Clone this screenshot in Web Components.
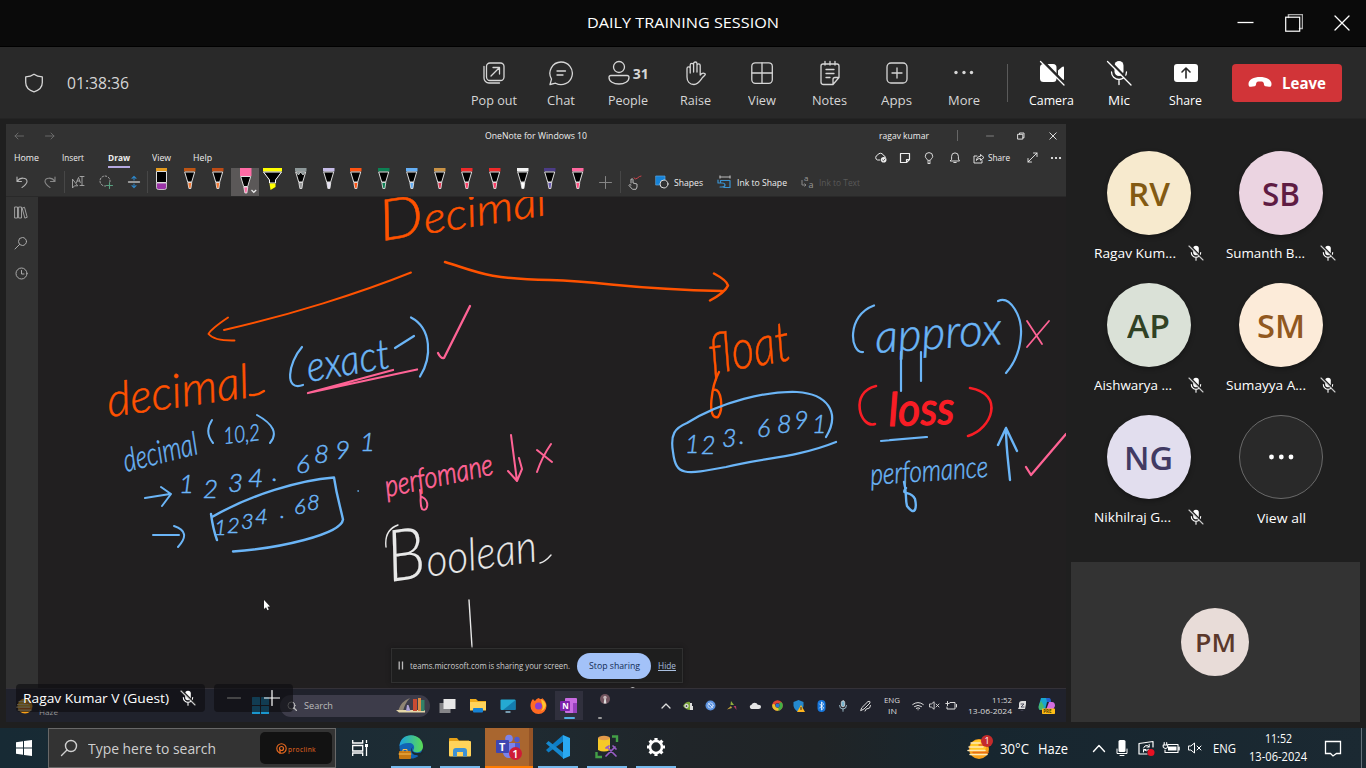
<!DOCTYPE html>
<html lang="en">
<head>
<meta charset="utf-8">
<title>DAILY TRAINING SESSION</title>
<style>
html,body{margin:0;height:100%;background:#1f1f1f;overflow:hidden}
body{font-family:"Open Sans","Noto Sans",sans-serif;color:#fff}
</style>
</head>
<body>
<meeting-app></meeting-app>
<script>
const svg = (w,h,vb,body) => `<svg width="${w}" height="${h}" viewBox="${vb}" fill="none" stroke="currentColor" stroke-width="1.3" stroke-linecap="round" stroke-linejoin="round">${body}</svg>`;
const F = 'stroke="none" fill=';
const ICONS = {
  shield: svg(20,20,'0 0 20 20','<path d="M10 1.2c2.3 1.7 4.8 2.500 8.300 2.700V9.500c0 4.600-3.400 7.800-8.300 9.300C5.100 17.300 1.700 14.100 1.700 9.500V3.900C5.200 3.700 7.700 2.900 10 1.200z"/>'),
  popout: svg(26,26,'0 0 26 26','<rect x="5.500" y="3" width="17.500" height="17.500" rx="3.500"/><path d="M3 6.500v11.500a5 5 0 0 0 5 5h10.500M10 16l8-8M12 7.500h6.500V14"/>'),
  chat: svg(26,26,'0 0 26 26','<path d="M13 2a11.300 11.300 0 1 1-5.400 21.200L2 24.500l1.500-5.400A11.300 11.300 0 0 1 13 2zM9 11h8.500M9 15h6"/>'),
  people: svg(22,26,'0 0 22 26','<circle cx="11" cy="7" r="5.500"/><path d="M3 15.500h16c1.200 0 2 .8 2 2 0 4-4.500 6.500-10 6.500S1 21.500 1 17.500c0-1.200.8-2 2-2z"/>'),
  hand: svg(26,26,'0 0 26 26','<path d="M5 17V8.500a1.600 1.600 0 0 1 3.200 0V13 5a1.700 1.700 0 0 1 3.400 0v7V3.700a1.700 1.700 0 0 1 3.400 0V12 5.500a1.600 1.600 0 0 1 3.200 0V15c1.200-1.500 3-2.500 4.800-1.300.6.4.3 1-.2 1.500l-2 2C18.500 20 16.500 24.500 12 24.500 7.500 24.500 5 21.500 5 17z"/>'),
  view: svg(26,26,'0 0 26 26','<rect x="2.800" y="2.800" width="20.500" height="20.500" rx="3.500"/><path d="M13 3v20M3 13h20"/>'),
  notes: svg(26,26,'0 0 26 26','<path d="M6 4h14a2 2 0 0 1 2 2v11.500L16 24.500H6.500A2.500 2.500 0 0 1 4 22V6a2 2 0 0 1 2-2zM8 1.500V5M13 1.500V5M18 1.500V5M9 9.500h8M9 13.500h8M9 17.500h4M16 24v-4.500a2 2 0 0 1 2-2h4"/>'),
  apps: svg(26,26,'0 0 26 26','<rect x="3" y="3" width="20" height="20" rx="4"/><path d="M13 8v10M8 13h10"/>'),
  more: svg(26,26,'0 0 26 26',`<g ${F}"currentColor"><circle cx="5" cy="12.500" r="1.700"/><circle cx="13" cy="12.500" r="1.700"/><circle cx="20.500" cy="12.500" r="1.700"/></g>`),
  camera: svg(26,26,'0 0 26 26',`<g ${F}"#fff"><rect x="1" y="4" width="16.500" height="18" rx="3.500"/><path d="M19 10.500 23 7q2-1.300 2 .8v11q0 2-2 .6l-4-3.200z"/></g><path d="M2.500 0 26 24" stroke="#292929" stroke-width="3"/><path d="M1.500 1.500 25 25" stroke="#fff"/>`),
  mic: svg(26,26,'0 0 26 26',`<rect ${F}"#fff" x="8.500" y="1" width="9" height="15" rx="4.500"/><path d="M5.500 12a7.500 7.500 0 0 0 15 0M13 19.500v5" stroke="#fff"/><path d="M2.500 0 26 24" stroke="#292929" stroke-width="2.500"/><path d="M1.500 1.500 25 25" stroke="#fff"/>`),
  share: svg(26,26,'0 0 26 26',`<rect ${F}"#fff" x="1" y="4" width="24" height="18" rx="3"/><path d="M13 18V8.500M9 12l4-4 4 4" stroke="#292929" stroke-width="1.600"/>`),
  phone: svg(24,14,'0 0 24 14',`<path ${F}"#fff" d="M12 1C18 1 23.500 3.500 23.500 8c0 2.500-1 3-2.500 2.800l-3.500-.6c-1.300-.3-1.500-1.300-1.700-3-.1-1.300-1.700-1.700-3.800-1.700s-3.700.4-3.800 1.700c-.2 1.700-.4 2.700-1.700 3L3 10.800C1.500 11 .5 10.500.5 8 .5 3.500 6 1 12 1z"/>`),
  wmin: svg(17,18,'0 0 17 18','<path d="M.5 8.500h16" stroke-linecap="butt"/>'),
  wmax: svg(18,18,'0 0 18 18','<path d="M3.500 3.500v-3h14v14h-3" stroke="#aaa" stroke-width="1.500" stroke-linejoin="miter"/><rect x=".7" y="3.200" width="14" height="14" stroke-width="1.200" stroke-linejoin="miter"/>'),
  wclose: svg(16,16,'0 0 16 16','<path d="m1 1 14 14M15 1 1 15"/>'),
  micoff: svg(16,16,'0 0 16 16',`<rect ${F}"#fff" x="5.200" y=".8" width="5.600" height="9.500" rx="2.800"/><path d="M3.300 7.500a4.700 4.700 0 0 0 9.400 0M8 12.300v3" stroke-width="1.100"/><path d="M1.800.3 16 14.500" stroke="#222" stroke-width="1.600"/><path d="m1 1 14 14" stroke-width="1.100" stroke="#ccc"/>`),
  dots: svg(28,8,'0 0 28 8',`<g ${F}"#fff"><circle cx="4.500" cy="4" r="2.400"/><circle cx="14.300" cy="4" r="2.400"/><circle cx="24" cy="4" r="2.400"/></g>`),
  back: svg(10,8,'0 0 10 8','<path d="M9.500 4H1M4 1 1 4l3 3" stroke="#6e6e6e" stroke-width=".9"/>'),
  fwd: svg(10,8,'0 0 10 8','<path d="M.5 4H9M6 1l3 3-3 3" stroke="#6e6e6e" stroke-width=".9"/>'),
  smin: svg(8,8,'0 0 8 8','<path d="M.5 4h7" stroke="#888" stroke-width=".9"/>'),
  smax: svg(8,8,'0 0 8 8','<rect x="1" y="2.300" width="4.800" height="4.800" stroke-width=".9"/><path d="M2.500 2V1H7v4.800H6" stroke-width=".9"/>'),
  sclose: svg(8,8,'0 0 8 8','<path d="m.8.8 6.400 6.400M7.200.8.8 7.200" stroke-width=".9"/>'),
  cloud: svg(13,11,'0 0 13 11','<path d="M6 8H3.500a2.500 2.500 0 0 1 0-4.800 3.200 3.200 0 0 1 6 .3q1.700.2 1.900 1.800" stroke-width="1"/><circle cx="9.700" cy="7.800" r="2.800" fill="#eee" stroke="none"/><path d="m8.500 8 .9.800L11 7" stroke="#333" stroke-width=".8"/>'),
  sticky: svg(12,12,'0 0 12 12','<path d="M1.500 1.500h9v6l-3 3h-6zM10.500 7.500h-3v3" stroke-width="1.200"/>'),
  bulb: svg(10,12,'0 0 10 12','<path d="M3.500 8C3 6.500 1.300 6 1.300 4.300a3.700 3.700 0 0 1 7.400 0C8.700 6 7 6.500 6.500 8zM3.500 10h3M4 11.500h2" stroke-width=".9"/>'),
  bell: svg(12,12,'0 0 12 12','<path d="M1.500 9h9L9.400 7V4.300a3.400 3.400 0 0 0-6.800 0V7zM4.800 10.500h2.400" stroke-width=".9"/>'),
  sshare: svg(12,12,'0 0 12 12','<path d="M4 4H1v7h8V8.500M3.500 8q.5-3.700 4-3.700V2.500L11 5.500 7.500 8.300V6.500q-2.500-.2-4 1.500z" stroke-width=".9"/>'),
  expand: svg(11,11,'0 0 11 11','<path d="m1 10 9-9M6.500 1H10v3.500M1 6.500V10h3.500" stroke-width=".9"/>'),
  sdots: svg(12,4,'0 0 12 4',`<g ${F}"#fff"><circle cx="2" cy="2" r="1.100"/><circle cx="6" cy="2" r="1.100"/><circle cx="10" cy="2" r="1.100"/></g>`),
  undo: svg(14,14,'0 0 14 14','<path d="M2 2v4.500h4.500M2.200 6.300C5 2 12 2.200 12 6.500c0 2.500-3 4.500-5 6" stroke="#b4b4b4" stroke-width="1.100"/>'),
  redo: svg(14,14,'0 0 14 14','<path d="M12 2v4.500H7.500M11.800 6.300C9 2 2 2.200 2 6.500c0 2.500 3 4.500 5 6" stroke="#888" stroke-width="1.100"/>'),
  select: svg(14,14,'0 0 14 14','<path d="M1.500 4.500v8.500l2-2.200h2.800zM9 1.500h4M11 1.500v9M9 10.500h4M5.500 7.500 7.500 2.500 9.300 7.500M6 6h2.700" stroke-width=".9" stroke="#aaa"/>'),
  lasso: svg(14,14,'0 0 14 14','<circle cx="6" cy="6" r="5" stroke-dasharray="1.500 1.800" stroke="#aaa" stroke-width="1"/><rect x="7" y="7" width="7" height="7" fill="#323232" stroke="none"/><path d="M10.500 7.500v6M7.500 10.500h6" stroke="#58a080" stroke-width="1.100"/>'),
  space: svg(14,14,'0 0 14 14','<path d="M1.500 7h11" stroke="#bbb"/><path d="M7 5V1.500M5 3.300l2-2 2 2M7 9v3.500M5 10.700l2 2 2-2" stroke="#2d86c8" stroke-width="1.100"/>'),
  plus: svg(13,13,'0 0 13 13','<path d="M6.500.5v12M.5 6.500h12" stroke="#858585" stroke-width="1"/>'),
  touch: svg(15,15,'0 0 15 15','<path d="M4 8V5M4 4.700a1 1 0 0 1 2 0V8l4 1v3l-1 2.300H5.500L2 10.500q0-1.600 2-.5" stroke="#bbb" stroke-width="1"/><path d="M7 3q1.500 2 3.500 0T14 1" stroke="#ce414a" stroke-width="1"/>'),
  shapes: svg(14,14,'0 0 14 14','<rect x="1" y="1" width="9" height="9" fill="#1683d8" stroke="#53a6e8" stroke-width=".7"/><circle cx="9" cy="9" r="4" fill="#323232" stroke="#ddd" stroke-width="1"/>'),
  inkshape: svg(15,14,'0 0 15 14','<path d="M3 2h10M3 .8v2.400M13 .8v2.400" stroke="#ccc" stroke-width=".9"/><path d="M7 12.500h6V5.500H3.500V8M1 5v3h4q3 0 3 2t-3 2H3" stroke="#3a92cf" stroke-width="1.200"/>'),
  inktext: `<svg width="15" height="16" viewBox="0 0 15 16" fill="none"><text x="4" y="7" font-size="8" fill="#999">a</text><text x="8.500" y="14" font-size="9" fill="#999">a</text><path d="M2 6v5h4M4.500 9.500 6 11l-1.500 1.500" stroke="#888"/></svg>`,
  books: svg(14,13,'0 0 14 13','<path d="M1 1h2.500v11H1zM5 1h2.500v11H5zM8.500 2l2-.7 2.700 10-2 .7z" stroke="#aaa" stroke-width=".9"/>'),
  find: svg(14,14,'0 0 14 14','<circle cx="8.500" cy="5.500" r="4" stroke="#aaa" stroke-width="1"/><path d="M5.500 8.500 1 13" stroke="#aaa" stroke-width="1"/>'),
  clock: svg(13,13,'0 0 13 13','<circle cx="6.500" cy="6.500" r="5.500" stroke="#aaa" stroke-width="1"/><path d="M6.500 3.500V7H9" stroke="#aaa" stroke-width="1"/>'),
  win11: svg(17,17,'0 0 17 17',`<g ${F}"#1a97cf"><rect width="8" height="8" rx=".5"/><rect x="9" width="8" height="8" rx=".5"/><rect y="9" width="8" height="8" rx=".5"/><rect x="9" y="9" width="8" height="8" rx=".5"/></g>`),
  win10: svg(16,16,'0 0 16 16',`<path ${F}"#fff" d="M0 2.200 7 1.200V7.500H0zM8 1.100 16 0V7.500H8zM0 8.500H7V14.800L0 13.800zM8 8.500h8V16L8 14.900z"/>`),
  sun: svg(24,22,'0 0 24 22',`<circle ${F}"#f9a119" cx="12" cy="11" r="10"/><path ${F}"#ffc928" d="M4 6A10 10 0 0 1 20 6l-2 7H3z"/><path d="M4 5h9M2 9h14M1 12.500h17M3 16.500h17" stroke="#ffe9b5" stroke-width="1.500"/><path d="M12 7h8M6 14.500h15" stroke="#e86c18" stroke-width="1.300"/>`),
  sgrey: svg(10,10,'0 0 10 10','<circle cx="4.500" cy="4.500" r="3.500" stroke="#bbb" stroke-width="1"/><path d="m7 7 2.500 2.500" stroke="#bbb"/>'),
  museum: svg(32,17,'0 0 32 17',`<g ${F}"#b58c5b"><path d="M3 14Q6 4 15 1q-5 5-7 13z" fill="#8f8574"/><path d="M1 13h29v2.500H4z" fill="#e4d6a8"/><path d="m11 14 1-6h1.500l2 6z" fill="#afa4d7"/><rect x="18" y="2" width="4" height="12" fill="#c84b33"/><rect x="23" y="1" width="3" height="13" fill="#d98c45"/><rect x="26" y="3" width="3.500" height="11" fill="#338067"/></g>`),
  tv11: svg(17,16,'0 0 17 16',`<rect ${F}"#858588" x=".5" y="5" width="11" height="10"/><rect ${F}"#e7e7e7" x="4.500" y="1" width="12" height="10"/>`),
  folder: svg(26,22,'0 0 26 22',`<path ${F}"#e6a117" d="M2 3q0-1 1-1h7l2 2.500h10V9H2z"/><rect ${F}"#ffd35a" x="2" y="5" width="22" height="15.500" rx="1"/><path ${F}"#3c91d4" d="M6 20.500V15q0-3 3-3h8q3 0 3 3v5.500h-4V16h-6v4.500z"/>`),
  folder11: svg(18,15,'0 0 18 15',`<path ${F}"#f0ae1d" d="M1 1h6l2 2h8v5H1z"/><rect ${F}"#ffd45a" x="1" y="4" width="16" height="8.500"/><rect ${F}"#1682d4" x="4" y="10" width="10" height="4.500" rx="1"/>`),
  monitor: svg(16,14,'0 0 16 14',`<rect ${F}"#25a9d2" x=".5" y=".5" width="15" height="10.500" rx="1"/><path ${F}"#147cae" d="M15.500 1v10H3z"/><path d="M6 13h4" stroke="#93c4da"/>`),
  firefox: svg(17,17,'0 0 17 17',`<path ${F}"#ff6b22" d="M8.500 1C10 2 12 3 12 1c3 2 4.500 5 4.500 8A8 8 0 0 1 .5 9C.5 6 1.500 3.500 3 2q1 1.500 2 2 1-2 3.500-3z"/><circle ${F}"#8b3fd1" cx="8.500" cy="9" r="3.500"/><path ${F}"#ffc62d" d="M11 2q4 2 5 6-1 5-5 6 3-3 1-7z"/>`),
  onenote: svg(18,18,'0 0 18 18',`<rect ${F}"#c96be2" x="5" y="1" width="12" height="15" rx="1"/><path ${F}"#9740bd" d="M13 6h4v10h-4z"/><rect ${F}"#7d22ab" x="0" y="4" width="10" height="10" rx="1"/><text x="2.300" y="12" font-size="8" font-weight="700" fill="#fff" stroke="none">N</text>`),
  person: svg(12,30,'0 0 12 30',`<circle ${F}"#71545e" cx="7" cy="8" r="5"/><circle ${F}"#c8b8bb" cx="7" cy="6.500" r="1.700"/><path ${F}"#ddd" d="M6.300 8h1.500l.6 4.500H5.700z"/><rect ${F}"#999" x="0" y="26" width="4" height="2" rx="1"/>`),
  up: svg(10,8,'0 0 10 8','<path d="m1 6 4-4 4 4"/>'),
  up10: svg(14,9,'0 0 14 9','<path d="m1.500 7.500 5.500-6 5.500 6" stroke-width="1.400"/>'),
  nvidia: svg(11,10,'0 0 11 10',`<path ${F}"#7ca63a" d="M0 5q3-5 7-4v8Q3 9 0 5z"/><circle cx="3.500" cy="5" r="1.500" fill="#222"/><path ${F}"#ddd" d="M7 2h2v3h1v4H7z"/>`),
  blue: svg(11,11,'0 0 11 11',`<circle ${F}"#5b92e0" cx="5.500" cy="5.500" r="5"/><circle cx="5.500" cy="5.500" r="2.600" stroke="#d3e3fb" stroke-width=".8"/><path d="M3.500 3.500l4 4" stroke="#d3e3fb" stroke-width="1"/>`),
  tri: svg(10,10,'0 0 10 10',`<path ${F}"#8fae3c" d="m4 0 3 4H3.500z"/><path ${F}"#c8a53b" d="m0 8.500 4-3.500 1 2z"/><path ${F}"#b03a64" d="M6.500 5H9l.5 4z"/>`),
  wcloud: svg(12,9,'0 0 12 9',`<path ${F}"#e5e5e5" d="M2.500 8a2.200 2.200 0 0 1 0-4.300 3.500 3.500 0 0 1 6.300 0Q12 3.600 12 6 12 8 9.500 8z"/>`),
  color: svg(11,11,'0 0 11 11',`<circle cx="5.500" cy="5.500" r="3.800" stroke="#e44332" stroke-width="3"/><path d="M5.500 9.300a3.800 3.800 0 0 0 3.300-5.600" stroke="#41b145" stroke-width="3"/><path d="M1.700 5.500a3.800 3.800 0 0 0 3.500 3.800" stroke="#e8c22c" stroke-width="3"/><circle ${F}"#2476cf" cx="5.500" cy="5.500" r="2"/>`),
  defend: svg(12,12,'0 0 12 12',`<path ${F}"#2489ce" d="M5.500 0 10.500 2v4q-1 4-5 6-4-2-5-6V2z"/><path ${F}"#ffb51e" d="m8 5 4 7H4z"/><path d="M8 7.500v2" stroke="#222" stroke-width="1"/>`),
  bt: svg(9,12,'0 0 9 12',`<rect ${F}"#1676dc" x=".5" width="8" height="12" rx="4"/><path d="m2.700 4 4 4L4.500 10V2l2.200 2-4 4" stroke="#fff" stroke-width=".8"/>`),
  smic: svg(10,12,'0 0 10 12','<rect x="3.300" y=".8" width="3.400" height="6" rx="1.700" fill="#77b3cd" stroke-width=".8"/><path d="M1.500 5.500a3.500 3.500 0 0 0 7 0M5 9v2.300" stroke="#a5c5d2" stroke-width=".9"/>'),
  pen: svg(12,12,'0 0 12 12','<path d="m2 7.500 6-6q2.500-1 2 1.500l-6 6-3 1.500zM5 11q1-3 3-2.500t2.500-3" stroke-width="1"/>'),
  wifi: svg(12,10,'0 0 12 10','<path d="M.7 3.500q5.300-4 10.600 0M2.500 5.500q3.500-2.500 7 0M4.300 7.300q1.700-1.100 3.400 0M6 8.800h.1" stroke-width="1"/>'),
  mute: svg(14,12,'0 0 14 12','<path d="M.8 4h2L6.500 1v10L2.800 8h-2zM9 4l4 4M13 4 9 8" stroke-width="1"/>'),
  mute11: svg(11,9,'0 0 14 12','<path d="M.8 4h2L6.500 1v10L2.800 8h-2zM9 4l4 4M13 4 9 8" stroke-width="1.200"/>'),
  batt: svg(12,9,'0 0 12 9','<path d="M5 1.500h5v6.500H2V6M11.500 3.500V6M2.500.5v4M.8 2.500h3.400" stroke-width="1"/>'),
  dnd: svg(10,12,'0 0 10 12',`<path ${F}"#ddd" d="m1 9 1-2V4q0-3 3-3h4v3L8 9z"/><path d="M4 10.500h2M4 4h3L4 7h3" stroke="#445" stroke-width=".9"/>`),
  copilot: svg(18,18,'0 0 18 18',`<path ${F}"#18a6cf" d="M3 1h7L7 13H2Q0 12 1 8z"/><path ${F}"#47b76c" d="m1 8 2-4 3 5-1 4H2Q0 12 1 8z"/><path ${F}"#2562d0" d="M8 1h3q2 0 2 4H9z"/><path ${F}"#d46de0" d="M11 5h3q3 0 3 4l-2 4H8z"/><rect ${F}"#ffbd16" x="4" y="11.500" width="13" height="5.500" rx=".7"/><text x="5.200" y="16" font-size="4.500" font-weight="700" fill="#553b00" stroke="none">PRE</text>`),
  search: svg(18,18,'0 0 18 18','<circle cx="11" cy="7" r="5.500" stroke-width="1.400"/><path d="M7 11 1.500 16.500" stroke-width="1.400"/>'),
  taskview: svg(18,18,'0 0 18 18','<path d="M1.700 1v3h10V1M1.700 17v-3h10v3M1.700 6.500h10v5.500h-10zM15.500 1v3M15.500 8v9" stroke-linecap="butt" stroke-linejoin="miter"/><rect x="14" y="5" width="3" height="3" fill="#fff" stroke="none"/>'),
  edge: svg(26,26,'0 0 26 26',`<defs><linearGradient id="eg"><stop stop-color="#1ba0e2"/><stop offset="1" stop-color="#5adb52"/></linearGradient></defs><circle ${F}"#1263b4" cx="13" cy="13" r="11.500"/><path ${F}"url(#eg)" d="M1.500 12C2 5 7 1.200 13 1.200c7 0 12 5 12 11 0 4-3 6-6.500 6-2.500 0-4-1.300-3-2.700 1.500-2 .5-6-3.500-6.500C7 8.500 3 10 1.500 12z"/><path ${F}"#1b2830" d="M14.500 12.500q-2.500 6 4.500 6.500 3 .3 5.500-1.500l1 1-4 4-3-1.500q-2 .5-4-1.500-2.500-3 0-7z"/><rect ${F}"#c57812" x="1" y="17" width="12" height="8" rx="1"/><path d="M5 17v-1.500h4V17M1 20h12" stroke="#f5bd57" stroke-width="1"/>`),
  teams: svg(26,26,'0 0 26 26',`<circle ${F}"#7b83eb" cx="13" cy="4.500" r="3.800"/><circle ${F}"#5059c9" cx="21" cy="5.500" r="2.700"/><path ${F}"#5059c9" d="M17 9h7v8q-1 4-7 3z"/><path ${F}"#7b83eb" d="M8 9h11v9q-1 6-6 6t-6-5z"/><rect ${F}"#3e46b2" y="6" width="13" height="13" rx="1"/><text x="3" y="16.500" font-size="11" font-weight="700" fill="#fff" stroke="none">T</text><circle ${F}"#cf1b36" cx="19.500" cy="19.500" r="6.500"/><text x="16.300" y="23.500" font-size="11" font-weight="600" fill="#fff" stroke="none">1</text>`),
  vscode: svg(26,26,'0 0 26 26',`<path ${F}"#0d7dc5" d="M18 1 1 16l2.500 2.500L19 7z"/><path ${F}"#1688ce" d="M1 9.500 3.500 7 19 19v6z"/><path ${F}"#2aa9f1" d="m18 1 7 3v18l-7 3z"/>`),
  sql: svg(24,24,'0 0 24 24',`<path ${F}"#f6c928" d="M3 3h12v12q-6 3-12 0z"/><ellipse ${F}"#e39b4b" cx="9" cy="3" rx="6" ry="2.200"/><path d="M17 1.500h5V7M1.500 17v5H7" stroke="#43a047" stroke-width="2.400" stroke-linecap="butt" stroke-linejoin="miter"/><path d="m12 12 9 9M20 12l-9 9M11 13l3-2M18 11l3 3" stroke="#985dc5" stroke-width="1.700"/>`),
  gear: svg(20,20,'0 0 20 20','<circle cx="10" cy="10" r="6" stroke-width="2.600"/><path d="M10 1v3M10 16v3M1 10h3M16 10h3M3.600 3.600l2.100 2.100M14.300 14.300l2.100 2.100M16.400 3.600l-2.100 2.100M5.700 14.300l-2.100 2.100" stroke-width="3.200" stroke-linecap="butt"/>'),
  fmic: svg(12,16,'0 0 12 16',`<rect ${F}"#fff" x="2.500" width="7" height="12" rx="1.500"/><path d="M1 9v4.500h10V9M4 15.500h4" stroke-width="1"/>`),
  sync: svg(18,17,'0 0 18 17','<path d="m1 3.500 14-2v4M1 3.500V14h8M15 7V2" stroke-width="1.200"/><path d="M5.500 8q1-3 4-2.500L11 7M11.200 4.500V7H9M10.500 9.500q-2 2.500-4.500.5M5.500 12V9.500H8" stroke-width="1"/><circle cx="13" cy="12.500" r="3.500" fill="#e81123" stroke="none"/>'),
  plug: svg(18,14,'0 0 18 14',`<path d="M6 3.500h10v8H3V9M17.200 6v3M1.200 4h4.500v2q-2 3-4.500 0zM2.200 4V1.500M4.700 4V1.500" stroke-width="1.100"/><rect ${F}"#fff" x="6" y="5.500" width="8.500" height="4"/>`),
  note: svg(18,17,'0 0 18 17','<path d="M1.500 1.500h15v12h-4L9 16l-2.500-2.500h-5z" stroke-linejoin="miter"/>'),
  minus: svg(14,14,'0 0 14 14','<path d="M.5 7h13" stroke="#555"/>'),
  bigplus: svg(16,16,'0 0 16 16','<path d="M8 .5v15M.5 8h15" stroke-width="1.200"/>'),
  target: svg(11,11,'0 0 11 11','<circle cx="5.500" cy="5.500" r="4.700" stroke="#ec6b20" stroke-width="1.100"/><circle cx="5.500" cy="5.500" r="2" stroke="#ec6b20" stroke-width="1.200"/><path d="M4 7v3" stroke="#ec6b20"/>'),
  pause: svg(6,9,'0 0 6 9','<path d="M1.200.5v8M4.500.5v8" stroke="#bbb" stroke-linecap="butt"/>')
};

const el = (tag, render, after) => customElements.define(tag, class extends HTMLElement {
  connectedCallback(){
    if(this.shadowRoot) return;
    this.attachShadow({mode:'open'}).innerHTML = render(this);
    if(after) after(this);
  }
});
const BASE = `*{box-sizing:border-box}ui-icon{flex:none}.c{display:flex;align-items:center;justify-content:center;flex:none}.g{flex:1}`;
const t = (s,w,size,extra='') => `<fit-text w="${w}" style="font-size:${size}px;${extra}">${s}</fit-text>`;
const cell = (w,inner,extra='') => `<div class="c" style="width:${w}px;${extra}">${inner}</div>`;
const ic = n => `<ui-icon name="${n}"></ui-icon>`;
/* Places fixed-size cells around their centres in one row: [centre, markup, width] */
const row = (start, items) => { let x=start; return items.map(([cx,m,w=14]) => { const gap=cx-w/2-x; x=cx+w/2; return cell(w,m,`margin-left:${gap}px`); }).join(''); };

el('ui-icon', e => `<style>:host{display:inline-flex}svg{display:block}text{font-family:"Open Sans",sans-serif}</style>${ICONS[e.getAttribute('name')]||''}`);

el('title-bar', () => `<style>${BASE}:host{display:grid;grid-template-columns:1fr auto 1fr;height:47px;background:#0a0a0a;border-bottom:1px solid #000;align-items:center}
nav{display:flex;justify-content:flex-end;gap:31px;padding-right:16px;align-items:center;height:46px}</style><span></span>${t('DAILY TRAINING SESSION',192,14.5,'margin-top:-1px')}<nav>${ic('wmin')}${ic('wmax')}${ic('wclose')}</nav>`);

el('call-button', e => `<style>${BASE}:host{display:flex;flex-direction:column;align-items:center;width:67.100px;color:#d6d6d6;flex:none;padding-top:13px}
:host([on]){color:#fff}.i{display:flex;height:26px;align-items:center;gap:3px;margin-bottom:5px}b{font-size:14px}</style><div class="i">${ic(e.getAttribute('icon'))}${e.hasAttribute('count')?`<b>${e.getAttribute('count')}</b>`:''}</div>${t(e.getAttribute('label'),e.getAttribute('w'),13)}`);

el('call-toolbar', () => `<style>${BASE}:host{display:flex;height:72px;background:#292929;border-bottom:1px solid #242424;padding-left:24px}
.clock{display:flex;align-items:center;gap:23px;width:436.500px;color:#d6d6d6}.sep{width:1px;height:38px;background:#5a5a5a;margin:17px 10px 0}
.leave{width:110px;height:38px;margin:17px 0 0 12px;border-radius:4px;background:#d13438;display:flex;align-items:center;justify-content:center;gap:10px;font-weight:700}</style>
<div class="clock">${ic('shield')}${t('01:38:36',62,16.500)}</div>
${[['popout','Pop out',46],['chat','Chat',28],['people','People',40,31],['hand','Raise',31],['view','View',28],['notes','Notes',35],['apps','Apps',31],['more','More',32]].map(([i,l,w,c])=>`<call-button icon="${i}" label="${l}" w="${w}" ${c?`count="${c}"`:''}></call-button>`).join('')}
<div class="sep"></div>${[['camera','Camera',45],['mic','Mic',22],['share','Share',33]].map(([i,l,w])=>`<call-button on icon="${i}" label="${l}" w="${w}"></call-button>`).join('')}
<div class="leave">${ic('phone')}${t('Leave',44,15.500)}</div>`);

el('ink-pen', e => { const c=e.getAttribute('color'), n=e.getAttribute('tip')||c, k=e.getAttribute('kind');
  const body = k==='eraser' ? `<path d="M2 0h11v3H2z" fill="#e39a1e"/><path d="M2.500 3.500h10v11h-10z" fill="#000" stroke="#ddd"/><path d="M2.500 15h10v4.500q0 2-2 2h-6q-2 0-2-2z" fill="#9b35a8" stroke="#ddd" stroke-width=".8"/>`
   : k==='marker' ? `<path d="M-2 0h19v3.500h-19z" fill="${c}"/><path d="M-1.500 4h18l-6 8v3h-6v-3z" fill="#000" stroke="#fff"/><path d="M4.500 15.500h6V19l-5 3z" fill="${c}"/>`
   : `<path d="M2 0h11.500v${k==='on'?8:3.500}H2z" fill="${c}"/><g transform="translate(0 ${k==='on'?4.500:0})"><path d="M2.700 4h10l-3 10h-4z" fill="#000" stroke="#ddd"/><path d="M5.800 14.500h4l-.9 6h-2z" fill="${n}" stroke="#eee" stroke-width=".8"/></g>${k==='pencil'?'<path d="m3 4 2.500 3 2-3 2.500 3L12.500 4" fill="#8d9899" stroke="#ddd" stroke-width=".7"/>':''}`;
  return `<style>:host{display:flex;width:27.720px;height:28px;justify-content:center;flex:none}:host([kind=on]){background:#5b5858}svg{overflow:visible}</style><svg width="15" height="27" viewBox="0 0 15 27">${body}${k==='on'?'<path d="m13.500 22 2.300 2.300L18.200 22" fill="none" stroke="#eee" stroke-width="1.200"/>':''}</svg>`; });

el('onenote-ribbon', () => `<style>${BASE}:host{display:block;height:73px;background:#323232;border-bottom:1px solid #292929;color:#eee}
.r{display:flex;align-items:center}.a{height:23px}.b{height:21px}.d{height:28px}.v{width:1px;height:22px;background:#474747}
.tab{height:21px;border-bottom:2px solid transparent;padding-top:2px}.on{border-color:#b5a8e0;font-weight:700}</style>
<div class="r a">${row(6,[[19,ic('back')],[50,ic('fwd')],[536,t('OneNote for Windows 10',102,9),102],[903.500,t('ragav kumar',50,8.500),50],[957.500,'<i class="v" style="height:11px;background:#666"></i>',2],[990,ic('smin')],[1021,ic('smax')],[1052.500,ic('sclose')]])}</div>
<div class="r b">${[[26.500,'Home',25],[73,'Insert',22],[118.500,'Draw',22,1],[161.500,'View',19],[202.500,'Help',19]].reduce((o,[cx,s,w,on])=>{o.h+=`<div class="c tab ${on?'on':''}" style="width:${w}px;margin-left:${cx-w/2-o.x}px">${t(s,w,9)}</div>`;o.x=cx+w/2;return o},{h:'',x:6}).h}
${row(212,[[880,ic('cloud')],[904.500,ic('sticky')],[929,ic('bulb')],[955,ic('bell')],[978.500,ic('sshare')],[998.500,t('Share',22,9),23],[1032,ic('expand')],[1056,ic('sdots')]])}</div>
<div class="r d">${row(6,[[22,ic('undo')],[50,ic('redo')],[64.500,'<i class="v"></i>',1],[78,ic('select')],[106,ic('lasso')],[133.500,ic('space')],[147.500,'<i class="v"></i>',1]])}
${[['#e39a1e','','eraser'],['#bd5413','#f37a35'],['#bd4b15','#f37a35'],['#ff6ba5','','on'],['#ffff00','','marker'],['#8d9899','#999','pencil'],['#c6bce8','#e4e0f3'],['#ff5211'],['#0c8053'],['#65aff5'],['#c99245','#e33c58'],['#ef2929','#ff3e67'],['#ef2929','#ff3e67'],['#f3f3f3','#fff'],['#4b3b86','#6a5bb0'],['#ff689f','#ff4d80']].map(([c,n,k])=>`<ink-pen color="${c}" tip="${n||''}" kind="${k||''}"></ink-pen>`).join('')}
${row(591.500,[[605,ic('plus')],[620,'<i class="v"></i>',1],[634,ic('touch')],[661.500,ic('shapes')],[688.500,t('Shapes',29,9),29],[724,ic('inkshape')],[761.500,t('Ink to Shape',50,9),50],[807,ic('inktext')],[839.500,t('Ink to Text',41,9,'color:#595959'),41]])}</div>`);

const num = (s, size, pts) => `<text font-size="${size}">${pts.map(([x,y],i)=>`<tspan x="${x}" y="${y}">${s[i]}</tspan>`).join('')}</text>`;
el('ink-canvas', () => `<style>:host{display:block;flex:1;background:#211f20;position:relative;overflow:hidden}
svg{display:block}text{font-family:Lato,sans-serif;font-style:italic;font-weight:300;stroke-width:.5px}
.o{color:#ff5200}.b{color:#6bb5f7}.p{color:#ff6395}.r{color:#f91d25}.w{color:#e8e8e8}
g{stroke:currentColor}text{fill:currentColor}path{fill:none}
slot{position:absolute;left:353px;top:451px;display:block}</style>
<svg width="1028" height="491" viewBox="38 197 1028 491" stroke-linecap="round" stroke-linejoin="round">
<g class="o" stroke-width="2.400">
<text transform="translate(382 241) rotate(-9)" font-size="43" textLength="168" lengthAdjust="spacingAndGlyphs"><tspan font-size="57">D</tspan>ecimal</text>
<path d="M411 272.500C360 293 290 315 224 330M228 317.500Q211 329 208.500 334q6 7 26 6.500" stroke-width="1.900"/>
<path d="M445 262C475 271 485 279 550 280c60 2 75 9 172 11M714 273.500q13 7 14 12-3 7-18 15" stroke-width="2.500"/>
<text transform="translate(109 417) rotate(-8)" font-size="47" textLength="143" lengthAdjust="spacingAndGlyphs">decimal</text><path d="M250 395q7 1 14-4"/>
<text transform="translate(712 374) rotate(-10)" font-size="56" textLength="82" lengthAdjust="spacingAndGlyphs">float</text>
<path d="M719 372C712 385 706 420 718 417c6-8 3-30-4-27"/>
</g>
<g class="b" stroke-width="2.200">
<path d="M302 347c-14 16-18 45 1 38M411 317.500c21 11 21 40 9 59M395 348l19-12"/>
<text transform="translate(309 382) rotate(-10)" font-size="42" textLength="84" lengthAdjust="spacingAndGlyphs">exact</text>
<text transform="translate(126 472) rotate(-14)" font-size="32" textLength="76" lengthAdjust="spacingAndGlyphs">decimal</text>
<path d="M212 420q-8 12 1 23M257 415q25 14 13 28" stroke-width="2"/>
<text transform="translate(224 444) rotate(-6)" font-size="23" textLength="37" lengthAdjust="spacingAndGlyphs">10,2</text>
${num('1234.6891',26,[[179,493],[203,498],[228,492],[248,487],[272,481],[296,473],[314,463],[335,459],[360,451]])}
${num('1234.68',22,[[214,535],[227,533],[241,529],[255,524],[280,518],[294,514],[307,510]])}
<path d="M145 498l25-4M161 487l10 7-9 12M153 535h26M174 526q18 6 4 21" stroke-width="2"/>
<path d="M211 514q2 15 6 26M212 517C250 495 300 480 334 477.500c3 20 6 28 9 42-2 15-65 29-110 32" stroke-width="2.400"/><circle cx="358" cy="491" r=".3" stroke-width="1"/>
<path d="M874 305.500c-28 10-24 48-11 46.500M998 301c12-6 24 15 23 33q-1 23-15 39"/>
<text transform="translate(876 353) rotate(-4)" font-size="46" textLength="127" lengthAdjust="spacingAndGlyphs">approx</text>
<path d="M901 352v39M921 352v29M881 441l46-4M890 440l36-3"/>
<path d="M673 452c-3-18 2-24 14-29 35-22 80-32 110-31 30 2 44 20 29 45M836 442c-40 16-75 16-110 25-42 8-50 9-53-15" stroke-width="2.200"/>
${num('123.6891',25,[[685,453],[701,454],[722,447],[739,444],[757,437],[777,433],[794,429],[812,433]])}
<text transform="translate(871 485) rotate(-4)" font-size="30" textLength="118" lengthAdjust="spacingAndGlyphs">perfomance</text>
<path d="M904 482c3 10 1 16 3 24 8 11 10 2 8-7-4-9-15-3-9-11M1010 480c-2-21-4-32-4-52l-8 17M1006 428l11 23" stroke-width="2.400"/>
</g>
<g class="r" stroke-width="2.600"><path d="M876 386c-27 6-16 43-1 38M970 388c35 6 22 41-2 48"/><text style="font-weight:400;stroke-width:1.200px" transform="translate(889 426) rotate(-2)" font-size="46" textLength="66" lengthAdjust="spacingAndGlyphs">loss</text></g>
<g class="p" stroke-width="2.300"><path d="M438 353q3 6 6 5L470 306M308 393l85-23M308 393l109-23.500"/>
<text style="stroke-width:.8px" transform="translate(387 497) rotate(-12)" font-size="30" textLength="110" lengthAdjust="spacingAndGlyphs">perfomane</text>
<path d="M420 490c2 8-1 12 2 19 6 4 8-9 0-12M511 435l6 46M508 471l9 10 5-12-3-11M537 450l15 12M551 444q-9 13-14 28" stroke-width="2"/><path d="M1027 321l15 23M1049 321l-22 26" stroke-width="1.800"/><path d="M1026 467l5 8 35-41"/></g>
<g class="w" stroke-width="1.400"><path d="M469 600l3 47"/><text style="stroke-width:.1px" transform="translate(390 582) rotate(-8)" font-size="45" textLength="150" lengthAdjust="spacingAndGlyphs"><tspan font-size="72">B</tspan>oolean</text><path d="M540 563q5-1 11-8M386 547q-2-17 12-22M630 689q3-2 5 0"/></g>
<path d="M264 600v9l2-1.700 1.500 3 1.300-.7-1.400-2.800 2.600-.3z" style="fill:#fff"/>
</svg><slot></slot>`);

el('share-notice', () => `<style>${BASE}:host{display:flex;align-items:center;width:292px;height:35px;background:#1e1e1e;border:1px solid #303030;box-shadow:0 0 4px #161616;color:#ccc;padding-left:6px}
.btn{width:74px;height:26px;border-radius:13px;background:#a3c2f8;color:#122b55;margin:0 7px 0 7px}</style>${ic('pause')}<span style="width:6px"></span>${t('teams.microsoft.com is sharing your screen.',160,8.500)}<div class="c btn">${t('Stop sharing',51,9)}</div>${t('<u>Hide</u>',18,8.500,'color:#a9bfdf')}`);

el('remote-taskbar', () => `<style>${BASE}:host{display:flex;align-items:center;height:34px;background:#20222c;border-top:1px solid #343138;color:#ddd}
.search{width:150px;height:22px;border-radius:11px;background:#3d3c4a;display:flex;align-items:center;padding:0 3px 0 7px;gap:7px;color:#bbb}.on{width:28px;height:29px;background:#30303d}.on::after{content:"";position:absolute;width:11px;height:2px;border-radius:1px;background:#55afe3;margin-top:25px}.col{display:flex;flex-direction:column;align-items:flex-end;line-height:12px}.w{width:48px;display:flex;align-items:center;color:#999}.w ui-icon{transform:scale(.75);margin-left:-3px}</style>
${row(6,[[40,`<div class="w">${ic('sun')}<span style="margin:9px 0 0 2px;line-height:10px">${t('Haze',19,8)}</span></div>`,52],[260.500,ic('win11'),17],[355,`<div class="search">${ic('sgrey')}${t('Search',29,9.500)}<i class="g"></i>${ic('museum')}</div>`,150],[447.500,ic('tv11')],[477.500,ic('folder11')],[508,ic('monitor')],[538.500,ic('firefox')],[569,`<div class="c on">${ic('onenote')}</div>`,28],[604,ic('person')],[666,ic('up')],[688.500,ic('nvidia')],[710,ic('blue')],[732,ic('tri')],[754.500,ic('wcloud')],[777,ic('color')],[799,ic('defend')],[821,ic('bt')],[843,ic('smic')],[866,ic('pen')],[892,`<div class="col" style="align-items:center;line-height:11px;margin-top:-2px">${t('ENG',16,8)}${t('IN',9,8)}</div>`,18],[918,ic('wifi')],[934.500,ic('mute11')],[951,ic('batt')],[989.500,`<div class="col" style="line-height:11px;margin-top:-2px">${t('11:52',20,8)}${t('13-06-2024',44,8)}</div>`,44],[1022,ic('dnd'),10],[1047,ic('copilot')]])}`);

el('stage-chips', () => `<style>${BASE}:host{display:flex;gap:9px}div{height:28px;border-radius:4px;background:rgba(14,14,16,.66);display:flex;align-items:center}</style>
<div style="width:189px;padding:0 9px 0 7px;justify-content:space-between">${t('Ragav Kumar V (Guest)',146,13.500)}${ic('micoff')}</div><div style="width:79px;padding:0 13px;justify-content:space-between">${ic('minus')}${ic('bigplus')}</div>`);

el('shared-screen', () => `<style>${BASE}:host{display:flex;flex-direction:column;width:1060px;height:598px;position:relative}
.m{display:flex;height:491px}.s{width:32px;background:#323232;display:flex;flex-direction:column;align-items:center;gap:17px;padding:9px 2px 0 0}
stage-chips{position:absolute;left:10px;top:560px}</style><onenote-ribbon></onenote-ribbon><div class="m"><div class="s">${ic('books')}${ic('find')}${ic('clock')}</div><ink-canvas><share-notice></share-notice></ink-canvas></div><remote-taskbar></remote-taskbar><stage-chips></stage-chips>`);

el('person-tile', e => { const a=k=>e.getAttribute(k), all=e.hasAttribute('all'); return `<style>${BASE}:host{display:flex;flex-direction:column;align-items:center;width:132px;height:132px}
.av{width:84px;height:84px;border-radius:50%;background:${a('bg')};color:${a('fg')};box-shadow:0 2px 5px #0005;font-weight:600;padding-right:1px}.all{background:#292929;border:1px solid #6a6a6a;box-shadow:none}
.n{display:flex;width:110px;height:20px;margin-top:8px;align-items:center;justify-content:space-between}.n.x{justify-content:center;margin-top:9px}</style>
<div class="c av ${all?'all':''}">${all?ic('dots'):t(a('ini'),a('iw'),32)}</div><div class="n ${all?'x':''}">${t(a('name'),a('w'),13.500)}${all?'':ic('micoff')}</div>`});

el('people-panel', () => `<style>${BASE}:host{display:flex;flex-direction:column;width:289px;height:598px}.g2{display:grid;grid-template-columns:132px 132px;padding:27px 0 0 12px;height:438px;align-content:start}
.self{height:160px;background:#333;padding-right:1px}.self div{width:68px;height:68px;border-radius:50%;background:#e8dcd8;color:#5b382b;font-weight:600}</style><div class="g2">
${[['RV',42,'Ragav Kum...',82,'#f7eace','#835a12'],['SB',38,'Sumanth B...',79,'#ebd4e1','#5f1c43'],['AP',43,'Aishwarya ...',78,'#dae1d7','#314225'],['SM',48,'Sumayya A...',80,'#fcebd9','#91581f'],['NG',49,'Nikhilraj G...',77,'#e2deee','#413a63']].map(([i,iw,n,w,bg,fg])=>`<person-tile ini="${i}" iw="${iw}" name="${n}" w="${w}" bg="${bg}" fg="${fg}"></person-tile>`).join('')}<person-tile all name="View all" w="49"></person-tile></div>
<div class="self c"><div class="c">${t('PM',41,26)}</div></div>`);

el('desktop-taskbar', () => `<style>${BASE}:host{display:flex;align-items:center;height:40px;background:linear-gradient(90deg,#172a34,#1e2c34 35%,#202529 50%,#202426 60%,#17262f 72%,#1b2932)}
.s{width:288px;height:40px;background:#333;border:1px solid #686868;display:flex;align-items:center;padding:0 3px 0 11px;color:#cfcfcf}.p{width:72px;height:32px;border-radius:5px;background:#121212;gap:1px}
.app{width:40px;height:40px;border-bottom:2px solid #76b9ed;display:flex;align-items:center;justify-content:center}.app.t{width:48px;background:#a9662f;border-color:#ff7b00;box-shadow:inset -4px 0 #945326}
.col{display:flex;flex-direction:column;align-items:center;line-height:18px}.wx{display:grid}.wx>*{grid-area:1/1}.wx ui-icon{margin-top:2px}.bd{width:12px;height:12px;border-radius:50%;background:#c42b2b;font-size:9px;line-height:12px;text-align:center;margin:-1px 0 0 14px;z-index:1}</style>
${row(0,[[24,ic('win10'),16],[192,`<div class="s">${ic('search')}<span style="width:10px"></span>${t('Type here to search',128,15)}<i class="g"></i><div class="c p">${ic('target')}${t('proclink',28,8,'color:#ec6b20;letter-spacing:.5px')}</div></div>`,288],[360,ic('taskview'),18],[411,`<div class="app">${ic('edge')}</div>`,40],[460,`<div class="app">${ic('folder')}</div>`,40],[509,`<div class="app t">${ic('teams')}</div>`,48],[558,`<div class="app">${ic('vscode')}</div>`,40],[607,`<div class="app">${ic('sql')}</div>`,40],[656,`<div class="app">${ic('gear')}</div>`,40],
[980,`<div class="wx">${ic('sun')}<div class="bd">1</div></div>`,24],[1014.500,t('30°C',29,14),29],[1053,t('Haze',30,14),30],[1099,ic('up10')],[1122,ic('fmic')],[1147,ic('sync')],[1171,ic('plug')],[1194.500,ic('mute')],[1224.500,t('ENG',23,12.500),23],[1278,`<div class="col">${t('11:52',27,12.500)}${t('13-06-2024',58,12.500)}</div>`,58],[1333,ic('note'),18],[1361.500,'<i style="width:1px;height:40px;background:#65717a"></i>',1]])}`);

el('meeting-app', () => `<style>${BASE}:host{display:flex;flex-direction:column;width:1366px;height:768px;background:#1f1f1f}
main{display:flex;gap:5px;padding:5px 6px 6px;height:609px}</style><title-bar></title-bar><call-toolbar></call-toolbar><main><shared-screen></shared-screen><people-panel></people-panel></main><desktop-taskbar></desktop-taskbar>`);

/* A label squeezed or stretched horizontally to a given width */
el('fit-text', e => `<style>:host{display:inline-block;flex:none;white-space:nowrap;width:${e.getAttribute('w')}px}span{display:inline-block;transform-origin:0 50%}</style><span><slot></slot></span>`, e => {
  const s=e.shadowRoot.querySelector('span'), n=s.getBoundingClientRect().width;
  if(n) s.style.transform=`scaleX(${e.getAttribute('w')/n})`;
});
</script>
</body>
</html>
